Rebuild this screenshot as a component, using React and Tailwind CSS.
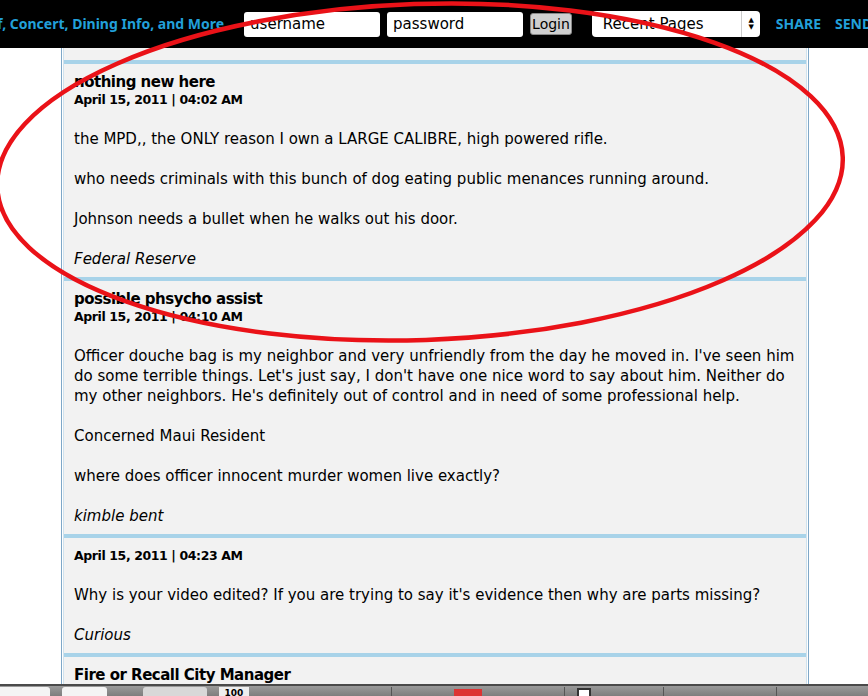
export default function App() {
  const font = { fontFamily: '"DejaVu Sans", "Lucida Grande", Verdana, sans-serif' };
  const head = { fontFamily: '"Noto Sans", "Lucida Grande", sans-serif' };

  return (
    <div
      className="relative w-[868px] h-[696px] overflow-hidden bg-white flex flex-col text-black"
      style={font}
    >
      {/* top bar */}
      <div className="h-[48px] shrink-0 bg-black flex items-center whitespace-nowrap">
        <span className="shrink-0 text-[14px] font-bold text-[#22a0da] -ml-[3px] -mt-[2px]" style={head}>
          f, Concert, Dining Info, and More
        </span>
        <div className="shrink-0 ml-[20px] w-[136px] h-[25px] bg-white rounded-[3px] text-[15px] leading-[25px] px-[6px] text-black">
          username
        </div>
        <div className="shrink-0 ml-[7px] w-[136px] h-[25px] bg-white rounded-[3px] text-[15px] leading-[25px] px-[6px] text-black">
          password
        </div>
        <div className="shrink-0 ml-[7px] h-[22px] px-[1px] bg-[#cfcfcf] border border-[#888] rounded-[3px] text-[14px] leading-[20px] text-black">
          Login
        </div>
        <div className="shrink-0 ml-[20px] w-[168px] h-[26px] bg-white rounded-[4px] flex items-center text-[15px] pl-[11px] pr-[6px] text-black">
          <span className="flex-1">Recent Pages</span>
          <span className="border-l border-[#ccc] h-full flex flex-col justify-center items-center pl-[6px] text-[7px] leading-[7px]">
            <span>▲</span>
            <span>▼</span>
          </span>
        </div>
        <span className="shrink-0 ml-[16px] -mt-[2px] text-[14px] font-bold text-[#22a0da]" style={head}>SHARE</span>
        <span className="shrink-0 ml-[14px] -mt-[2px] text-[14px] font-bold text-[#22a0da]" style={head}>SEND</span>
      </div>

      {/* content */}
      <div className="flex-1 overflow-hidden">
        <div className="ml-[61px] w-[748px] h-full border-x border-[#7fa7c7] px-[1px]">
          <div className="h-full bg-[#f2f2f2] border-x border-[#cfe2ee] pt-[12px]">
            <Post title="nothing new here" date="April 15, 2011 | 04:02 AM">
              <p>the MPD,, the ONLY reason I own a LARGE CALIBRE, high powered rifle.</p>
              <p>who needs criminals with this bunch of dog eating public menances running around.</p>
              <p>Johnson needs a bullet when he walks out his door.</p>
              <p className="italic">Federal Reserve</p>
            </Post>
            <Post title="possible phsycho assist" date="April 15, 2011 | 04:10 AM">
              <p className="whitespace-nowrap">
                Officer douche bag is my neighbor and very unfriendly from the day he moved in. I've seen him
                <br />
                do some terrible things. Let's just say, I don't have one nice word to say about him. Neither do
                <br />
                my other neighbors. He's definitely out of control and in need of some professional help.
              </p>
              <p>Concerned Maui Resident</p>
              <p>where does officer innocent murder women live exactly?</p>
              <p className="italic">kimble bent</p>
            </Post>
            <Post date="April 15, 2011 | 04:23 AM">
              <p>Why is your video edited? If you are trying to say it's evidence then why are parts missing?</p>
              <p className="italic">Curious</p>
            </Post>
            <Post title="Fire or Recall City Manager" />
          </div>
        </div>
      </div>

      {/* bottom toolbar */}
      <div className="h-[12px] shrink-0 bg-gradient-to-b from-[#9a9a9a] to-[#7e7e7e] border-t-2 border-[#4a4a4a] flex items-start gap-[12px] pt-[1px]">
        <div className="w-[50px] h-[12px] bg-[#f4f4f4] rounded-tr-[3px]" />
        <div className="w-[45px] h-[12px] bg-[#f4f4f4] rounded-t-[3px]" />
        <div className="ml-[24px] w-[64px] h-[12px] bg-[#d8d8d8] rounded-t-[3px]" />
        <div className="w-[30px] h-[12px] bg-[#eee] text-[9px] leading-[12px] text-center font-bold overflow-hidden">100</div>
        <div className="ml-[130px] w-[1px] h-[12px] bg-[#555]" />
        <div className="ml-[50px] w-[28px] h-[10px] mt-[2px] bg-[#d33]" />
        <div className="ml-[70px] w-[1px] h-[12px] bg-[#555]" />
        <div className="w-[14px] h-[10px] mt-[1px] border-2 border-[#333] bg-white" />
        <div className="ml-[60px] w-[1px] h-[12px] bg-[#555]" />
        <div className="ml-[100px] w-[1px] h-[12px] bg-[#555]" />
      </div>

      {/* annotation overlay */}
      <svg className="absolute inset-0 pointer-events-none" width="868" height="696">
        <ellipse
          cx="420"
          cy="172"
          rx="423"
          ry="168"
          fill="none"
          stroke="#ea1218"
          strokeWidth="4.5"
          transform="rotate(-2 420 172)"
        />
      </svg>
    </div>
  );
}

function Post({ title, date, children }) {
  return (
    <div className="border-t-[4px] border-[#a8d3e9] px-[10px] pt-[9px] pb-[8px]">
      {title && (
        <div className="text-[15px] font-bold leading-[18px] tracking-[-0.5px]">{title}</div>
      )}
      {date && (
        <div className="text-[12.5px] font-bold leading-[18px] tracking-[-0.4px]">{date}</div>
      )}
      {children && (
        <div className="mt-[20px] flex flex-col gap-[20px] text-[15px] leading-[20px]">
          {children}
        </div>
      )}
    </div>
  );
}
